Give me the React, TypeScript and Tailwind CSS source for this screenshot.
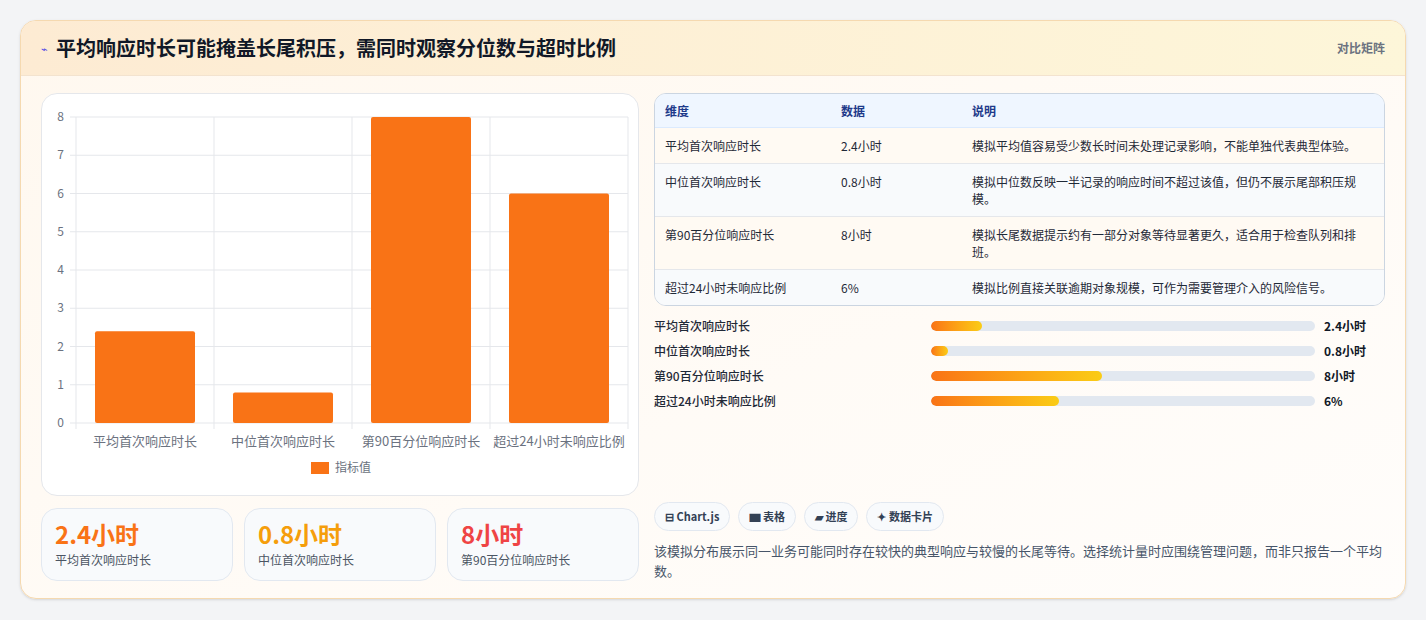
import React from "react";

const F = { fontFamily: '"Noto Sans CJK SC", "Noto Sans", sans-serif' };
const rows = [
  ["平均首次响应时长", "2.4小时", "模拟平均值容易受少数长时间未处理记录影响，不能单独代表典型体验。"],
  ["中位首次响应时长", "0.8小时", "模拟中位数反映一半记录的响应时间不超过该值，但仍不展示尾部积压规模。"],
  ["第90百分位响应时长", "8小时", "模拟长尾数据提示约有一部分对象等待显著更久，适合用于检查队列和排班。"],
  ["超过24小时未响应比例", "6%", "模拟比例直接关联逾期对象规模，可作为需要管理介入的风险信号。"],
];
const bars = [
  ["平均首次响应时长", 2.4, "2.4小时"],
  ["中位首次响应时长", 0.8, "0.8小时"],
  ["第90百分位响应时长", 8, "8小时"],
  ["超过24小时未响应比例", 6, "6%"],
] as const;

function Chart() {
  const x0 = 34, y0 = 23, w = 552, h = 306;
  const cw = w / 4;
  return (
    <svg width="596" height="400" style={F}>
      {[0, 1, 2, 3, 4, 5, 6, 7, 8].map((v) => {
        const y = y0 + h - (v * h) / 8;
        return (
          <g key={v}>
            <line x1={x0 - 6} x2={x0 + w} y1={y} y2={y} stroke="#e5e7eb" />
            <text x={x0 - 12} y={y + 4} fontSize="12" fill="#6b7280" textAnchor="end">{v}</text>
          </g>
        );
      })}
      {[0, 1, 2, 3, 4].map((i) => (
        <line key={i} x1={x0 + i * cw} x2={x0 + i * cw} y1={y0} y2={y0 + h + 6} stroke="#e5e7eb" />
      ))}
      {bars.map(([l, v], i) => {
        const bh = (v * h) / 8;
        return (
          <g key={i}>
            <rect x={x0 + i * cw + 19} y={y0 + h - bh} width={100} height={bh} fill="#f97316" rx="2" />
            <text x={x0 + i * cw + cw / 2} y={y0 + h + 23} fontSize="13" fill="#6b7280" textAnchor="middle">{l}</text>
          </g>
        );
      })}
      <rect x={269} y={368} width={18} height={12} fill="#f97316" />
      <text x={293} y={378} fontSize="12" fill="#6b7280">指标值</text>
    </svg>
  );
}

export default function App() {
  return (
    <div className="min-h-[620px] bg-[#f3f4f6] p-5 pb-[20px]" style={F}>
      <div className="rounded-2xl border border-[#f5d9b0] bg-gradient-to-br from-[#fff8ef] to-[#fffdfb] overflow-hidden shadow-sm">
        <div className="h-[55px] flex items-center justify-between px-5 bg-gradient-to-r from-[#fdebd3] to-[#fdf6d9] border-b border-[#f3e3cf]">
          <div className="flex items-center gap-2">
            <span className="text-[#4f46e5] text-[11px]">⌁</span>
            <span className="text-[20px] font-bold text-[#111827]">平均响应时长可能掩盖长尾积压，需同时观察分位数与超时比例</span>
          </div>
          <span className="text-[12px] text-[#6b7280] font-semibold">对比矩阵</span>
        </div>
        <div className="flex gap-[15px] px-5 pt-[17px] pb-[17px]">
          <div className="w-[598px] flex flex-col gap-[12px]">
            <div className="h-[403px] rounded-2xl border border-[#e5e7eb] bg-white overflow-hidden">
              <Chart />
            </div>
            <div className="flex gap-[11px]">
              {[["2.4小时", "text-[#f97316]", "平均首次响应时长"], ["0.8小时", "text-[#f59e0b]", "中位首次响应时长"], ["8小时", "text-[#ef4444]", "第90百分位响应时长"]].map(([v, c, l]) => (
                <div key={l} className="flex-1 h-[73px] rounded-2xl border border-[#e2e8f0] bg-[#f8fafc] px-[13px] pt-[10px]">
                  <div className={`text-[24px] font-bold leading-[30px] ${c}`}>{v}</div>
                  <div className="text-[12px] text-[#4b5563] mt-[2px]">{l}</div>
                </div>
              ))}
            </div>
          </div>
          <div className="flex-1 flex flex-col">
            <div className="rounded-xl border border-[#cbd5e1] overflow-hidden bg-white text-[12px]">
              <div className="flex h-[34px] items-center bg-[#eff6ff] text-[#1e3a8a] font-semibold border-b border-[#dbeafe]">
                <div className="w-[186px] pl-[10px]">维度</div><div className="w-[131px]">数据</div><div>说明</div>
              </div>
              {rows.map((r, i) => (
                <div key={i} className={`flex py-[9px] text-[#1f2937] ${i < 3 ? "border-b border-[#e5e7eb]" : ""} ${i % 2 === 0 ? "bg-[#fffaf3]" : "bg-[#f8fafc]"}`}>
                  <div className="w-[186px] pl-[10px] shrink-0 leading-[17px]">{r[0]}</div>
                  <div className="w-[131px] shrink-0 leading-[17px]">{r[1]}</div>
                  <div className="pr-[20px] leading-[17px]">{r[2]}</div>
                </div>
              ))}
            </div>
            <div className="mt-[11px] flex flex-col gap-[8px]">
              {bars.map(([l, v, t]) => (
                <div key={l} className="flex items-center h-[17px] text-[12px]">
                  <div className="w-[277px] text-[#1f2937] font-medium">{l}</div>
                  <div className="w-[384px] h-[10px] rounded-full bg-[#e2e8f0] overflow-hidden">
                    <div className="h-full rounded-full bg-gradient-to-r from-[#f97316] to-[#facc15]" style={{ width: `${(v / 18) * 100}%` }} />
                  </div>
                  <div className="ml-[9px] font-bold text-[#111827]">{t}</div>
                </div>
              ))}
            </div>
            <div className="mt-auto flex gap-[8px]">
              {["⊟ Chart.js", "▆ 表格", "▰ 进度", "✦ 数据卡片"].map((c) => (
                <span key={c} className="rounded-full border border-[#e2e8f0] bg-[#f8fafc] px-[10px] h-[29px] flex items-center text-[11px] font-bold text-[#334155]">{c}</span>
              ))}
            </div>
            <p className="mt-[10px] text-[13px] leading-[20px] text-[#475569]">该模拟分布展示同一业务可能同时存在较快的典型响应与较慢的长尾等待。选择统计量时应围绕管理问题，而非只报告一个平均数。</p>
          </div>
        </div>
      </div>
    </div>
  );
}
